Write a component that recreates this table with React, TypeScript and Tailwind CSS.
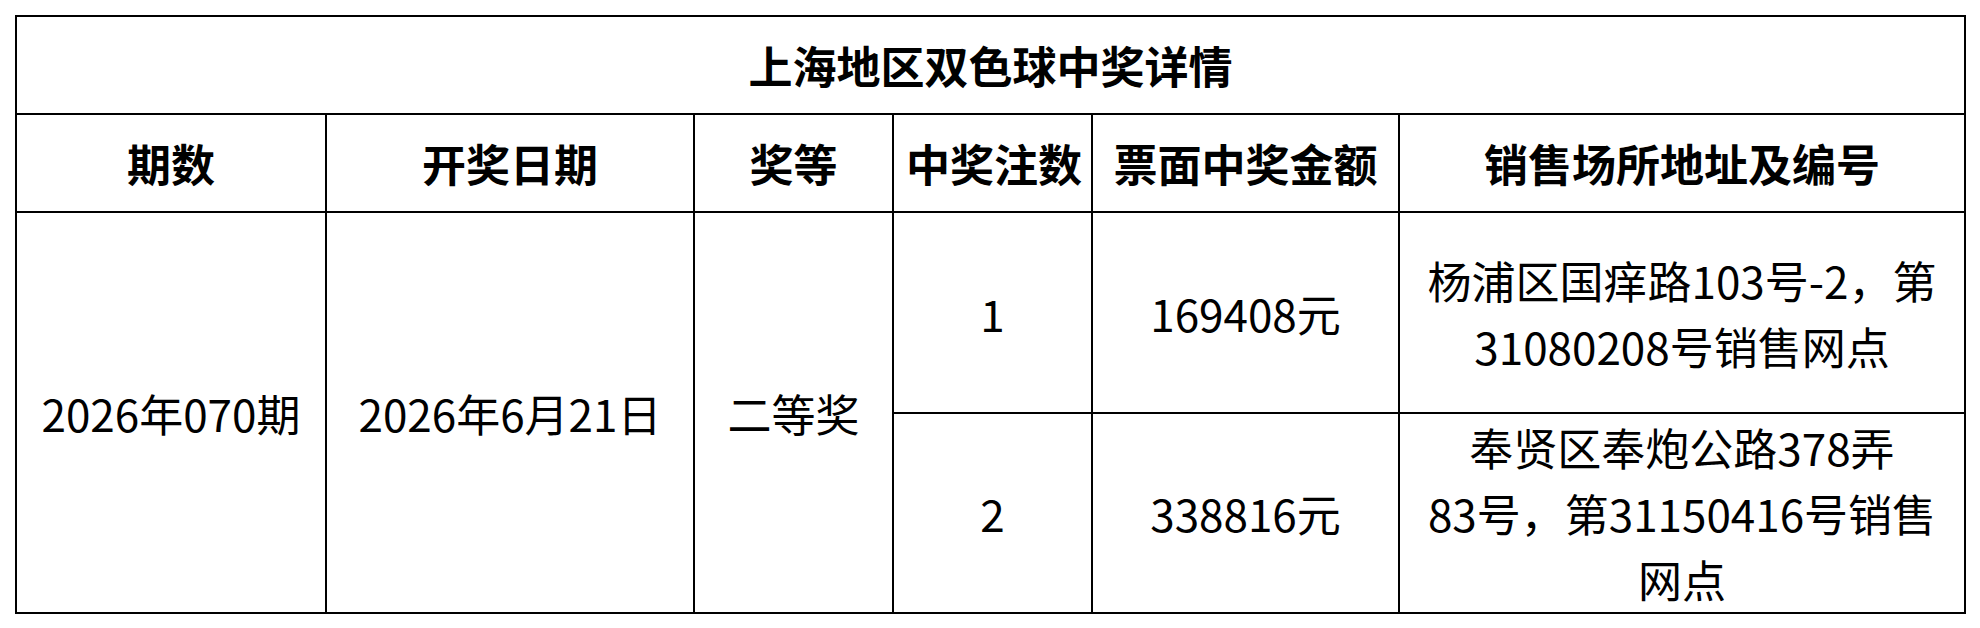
const cell = "border-2 border-black text-center align-middle px-3";

export default function App() {
  return (
    <div className="min-h-screen bg-white pl-[15px] pt-[15px] text-black font-['Microsoft_YaHei','Noto_Sans_CJK_SC',sans-serif]">
      <table className="table-fixed border-collapse w-[1949px] text-[44px] leading-[66px]">
        <colgroup>
          <col className="w-[310px]" />
          <col className="w-[368px]" />
          <col className="w-[199px]" />
          <col className="w-[199px]" />
          <col className="w-[307px]" />
          <col className="w-[566px]" />
        </colgroup>
        <thead>
          <tr className="h-[98px]">
            <th colSpan={6} className={`${cell} font-bold`}>
              上海地区双色球中奖详情
            </th>
          </tr>
          <tr className="h-[98px] font-bold">
            <th className={cell}>期数</th>
            <th className={cell}>开奖日期</th>
            <th className={cell}>奖等</th>
            <th className={`${cell} px-0 whitespace-nowrap`}>中奖注数</th>
            <th className={`${cell} px-0 whitespace-nowrap`}>票面中奖金额</th>
            <th className={cell}>销售场所地址及编号</th>
          </tr>
        </thead>
        <tbody>
          <tr className="h-[201px]">
            <td rowSpan={2} className={`${cell} whitespace-nowrap px-0`}>
              2026年070期
            </td>
            <td rowSpan={2} className={`${cell} whitespace-nowrap px-0`}>
              2026年6月21日
            </td>
            <td rowSpan={2} className={cell}>
              二等奖
            </td>
            <td className={cell}>1</td>
            <td className={cell}>169408元</td>
            <td className={`${cell} whitespace-nowrap`}>
              杨浦区国痒路103号-2，第
              <br />
              31080208号销售网点
            </td>
          </tr>
          <tr className="h-[199px]">
            <td className={cell}>2</td>
            <td className={cell}>338816元</td>
            <td className={`${cell} whitespace-nowrap`}>
              奉贤区奉炮公路378弄
              <br />
              83号，第31150416号销售
              <br />
              网点
            </td>
          </tr>
        </tbody>
      </table>
    </div>
  );
}
